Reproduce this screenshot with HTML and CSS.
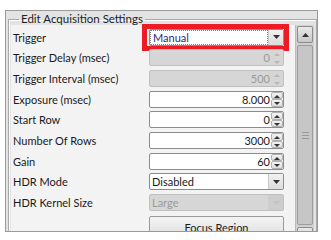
FILE: index.html
```html
<!DOCTYPE html>
<html lang="en">
<head>
  <meta charset="UTF-8" />
  <title>Edit Acquisition Settings</title>
  <link rel="stylesheet" href="styles.css">
</head>
<body>
  <div class="panel">
    <fieldset class="group">
      <legend>Edit Acquisition Settings</legend>
      <div class="body">
        <div class="rows">
          <div class="row">
            <span class="label">Trigger</span>
            <div class="combo">
              <span class="value selected">Manual</span>
              <span class="drop"><svg width="7" height="4" viewBox="0 0 7 4"><path d="M0 0h7L3.5 4z" fill="#333"/></svg></span>
            </div>
            <div class="highlight"></div>
          </div>
          <div class="row">
            <span class="label">Trigger Delay (msec)</span>
            <div class="spin disabled">
              <span class="value">0</span>
              <span class="arrows"><i class="up"></i><i class="down"></i></span>
            </div>
          </div>
          <div class="row">
            <span class="label">Trigger Interval (msec)</span>
            <div class="spin disabled">
              <span class="value">500</span>
              <span class="arrows"><i class="up"></i><i class="down"></i></span>
            </div>
          </div>
          <div class="row">
            <span class="label">Exposure (msec)</span>
            <div class="spin">
              <span class="value">8.000</span>
              <span class="arrows"><i class="up"></i><i class="down"></i></span>
            </div>
          </div>
          <div class="row">
            <span class="label">Start Row</span>
            <div class="spin">
              <span class="value">0</span>
              <span class="arrows"><i class="up"></i><i class="down"></i></span>
            </div>
          </div>
          <div class="row">
            <span class="label">Number Of Rows</span>
            <div class="spin">
              <span class="value">3000</span>
              <span class="arrows"><i class="up"></i><i class="down"></i></span>
            </div>
          </div>
          <div class="row">
            <span class="label">Gain</span>
            <div class="spin">
              <span class="value">60</span>
              <span class="arrows"><i class="up"></i><i class="down"></i></span>
            </div>
          </div>
          <div class="row">
            <span class="label">HDR Mode</span>
            <div class="combo">
              <span class="value">Disabled</span>
              <span class="drop"><svg width="7" height="4" viewBox="0 0 7 4"><path d="M0 0h7L3.5 4z" fill="#333"/></svg></span>
            </div>
          </div>
          <div class="row">
            <span class="label">HDR Kernel Size</span>
            <div class="combo disabled">
              <span class="value">Large</span>
              <span class="drop"><svg width="7" height="4" viewBox="0 0 7 4"><path d="M0 0h7L3.5 4z" fill="#c4c4c4"/></svg></span>
            </div>
          </div>
          <div class="row">
            <span class="label"></span>
            <button class="button">Focus Region</button>
          </div>
        </div>
        <div class="scrollbar">
          <span class="sb-btn"><svg width="7" height="4" viewBox="0 0 7 4"><path d="M0 4h7L3.5 0z" fill="#333"/></svg></span>
          <span class="sb-thumb"><i></i><i></i><i></i></span>
          <span class="sb-btn"><svg width="7" height="4" viewBox="0 0 7 4"><path d="M0 0h7L3.5 4z" fill="#333"/></svg></span>
        </div>
      </div>
    </fieldset>
  </div>
</body>
</html>
```

FILE: styles.css
```css
body {
  margin: 0;
  background: #fff;
  font-family: Lato, 'Noto Sans', sans-serif;
  font-size: 11px;
  color: #1a1a1a;
}
.panel {
  margin: 10px 0 0 5px;
  width: 313px;
  height: 222px;
  border: 1px solid #9a9a9a;
  background: #e3e3e3;
  padding: 2px 2px 0 2px;
  box-sizing: border-box;
  overflow: hidden;
}
.group {
  margin: 0;
  padding: 0 2px 0 2px;
  border: 1px solid #a8a8a8;
  box-shadow: inset 1px 1px 0 #fff;
  height: 226px;
}
.group legend {
  margin-left: 8px;
  padding: 0 2px;
  color: #222;
  font-size: 11.5px;
  line-height: 12px;
}
.body {
  display: flex;
  background: #f3f3f3;
  height: 220px;
}
.rows {
  width: 283px;
  padding-top: 2px;
}
.row {
  position: relative;
  display: flex;
  align-items: center;
  height: 20.67px;
}
.label {
  width: 136px;
  padding-left: 2px;
  white-space: nowrap;
}
.combo,
.spin {
  display: flex;
  align-items: stretch;
  width: 135px;
  height: 17px;
  box-sizing: border-box;
  border: 1px solid #8c8c8c;
  border-radius: 2px;
  background: #fff;
}
.combo .value {
  flex: 1;
  padding-left: 2px;
  line-height: 15px;
}
.combo .value.selected {
  margin: 1px;
  outline: 1px dotted #888;
  line-height: 13px;
  color: #2d2a7a;
}
.drop {
  width: 14px;
  display: flex;
  align-items: center;
  justify-content: center;
  border-left: 1px solid #c8c8c8;
  background: linear-gradient(#f2f2f2, #dcdcdc);
}
.spin .value {
  flex: 1;
  text-align: right;
  line-height: 15px;
  padding-right: 1px;
}
.arrows {
  width: 12px;
  display: flex;
  flex-direction: column;
}
.arrows i {
  flex: 1;
  position: relative;
  background: linear-gradient(#f4f4f4, #dedede);
  border: 1px solid #b0b0b0;
  border-radius: 2px;
}
.arrows i::after {
  content: "";
  position: absolute;
  left: 2px;
  top: 2px;
  border-left: 3px solid transparent;
  border-right: 3px solid transparent;
}
.arrows .up::after {
  border-bottom: 3px solid #333;
}
.arrows .down::after {
  border-top: 3px solid #333;
}
.disabled {
  background: #d6d6d6;
  border-color: #c0c0c0;
  color: #9a9a9a;
}
.disabled .arrows i {
  background: #d6d6d6;
  border-color: #d6d6d6;
}
.disabled .arrows .up::after {
  border-bottom-color: #b8b8b8;
}
.disabled .arrows .down::after {
  border-top-color: #b8b8b8;
}
.combo.disabled .drop {
  background: #cdcdcd;
  border-left-color: #cdcdcd;
}
.button {
  width: 135px;
  height: 24px;
  font: inherit;
  color: #1a1a1a;
  border: 1px solid #9a9a9a;
  border-radius: 2px;
  background: linear-gradient(#f4f4f4, #dcdcdc);
  margin-top: 9px;
}
.highlight {
  position: absolute;
  left: 131px;
  top: -3px;
  width: 147px;
  height: 27px;
  box-sizing: border-box;
  border: 5px solid #ed1c24;
}
.scrollbar {
  width: 18px;
  margin-left: 1px;
  display: flex;
  flex-direction: column;
  background: #d0d0d0;
  border-left: 1px solid #bbb;
}
.sb-btn {
  height: 15px;
  display: flex;
  align-items: center;
  justify-content: center;
  margin: 1px;
  border: 1px solid #8c8c8c;
  border-radius: 2px;
  background: linear-gradient(#e8e8e8, #c8c8c8);
}
.sb-thumb {
  flex: 1;
  margin: 1px;
  border: 1px solid #9c9c9c;
  border-radius: 2px;
  background: #c6c6c6;
  display: flex;
  flex-direction: column;
  align-items: center;
  justify-content: center;
  gap: 2px;
}
.sb-thumb i {
  width: 7px;
  height: 1px;
  background: #999;
}
```
